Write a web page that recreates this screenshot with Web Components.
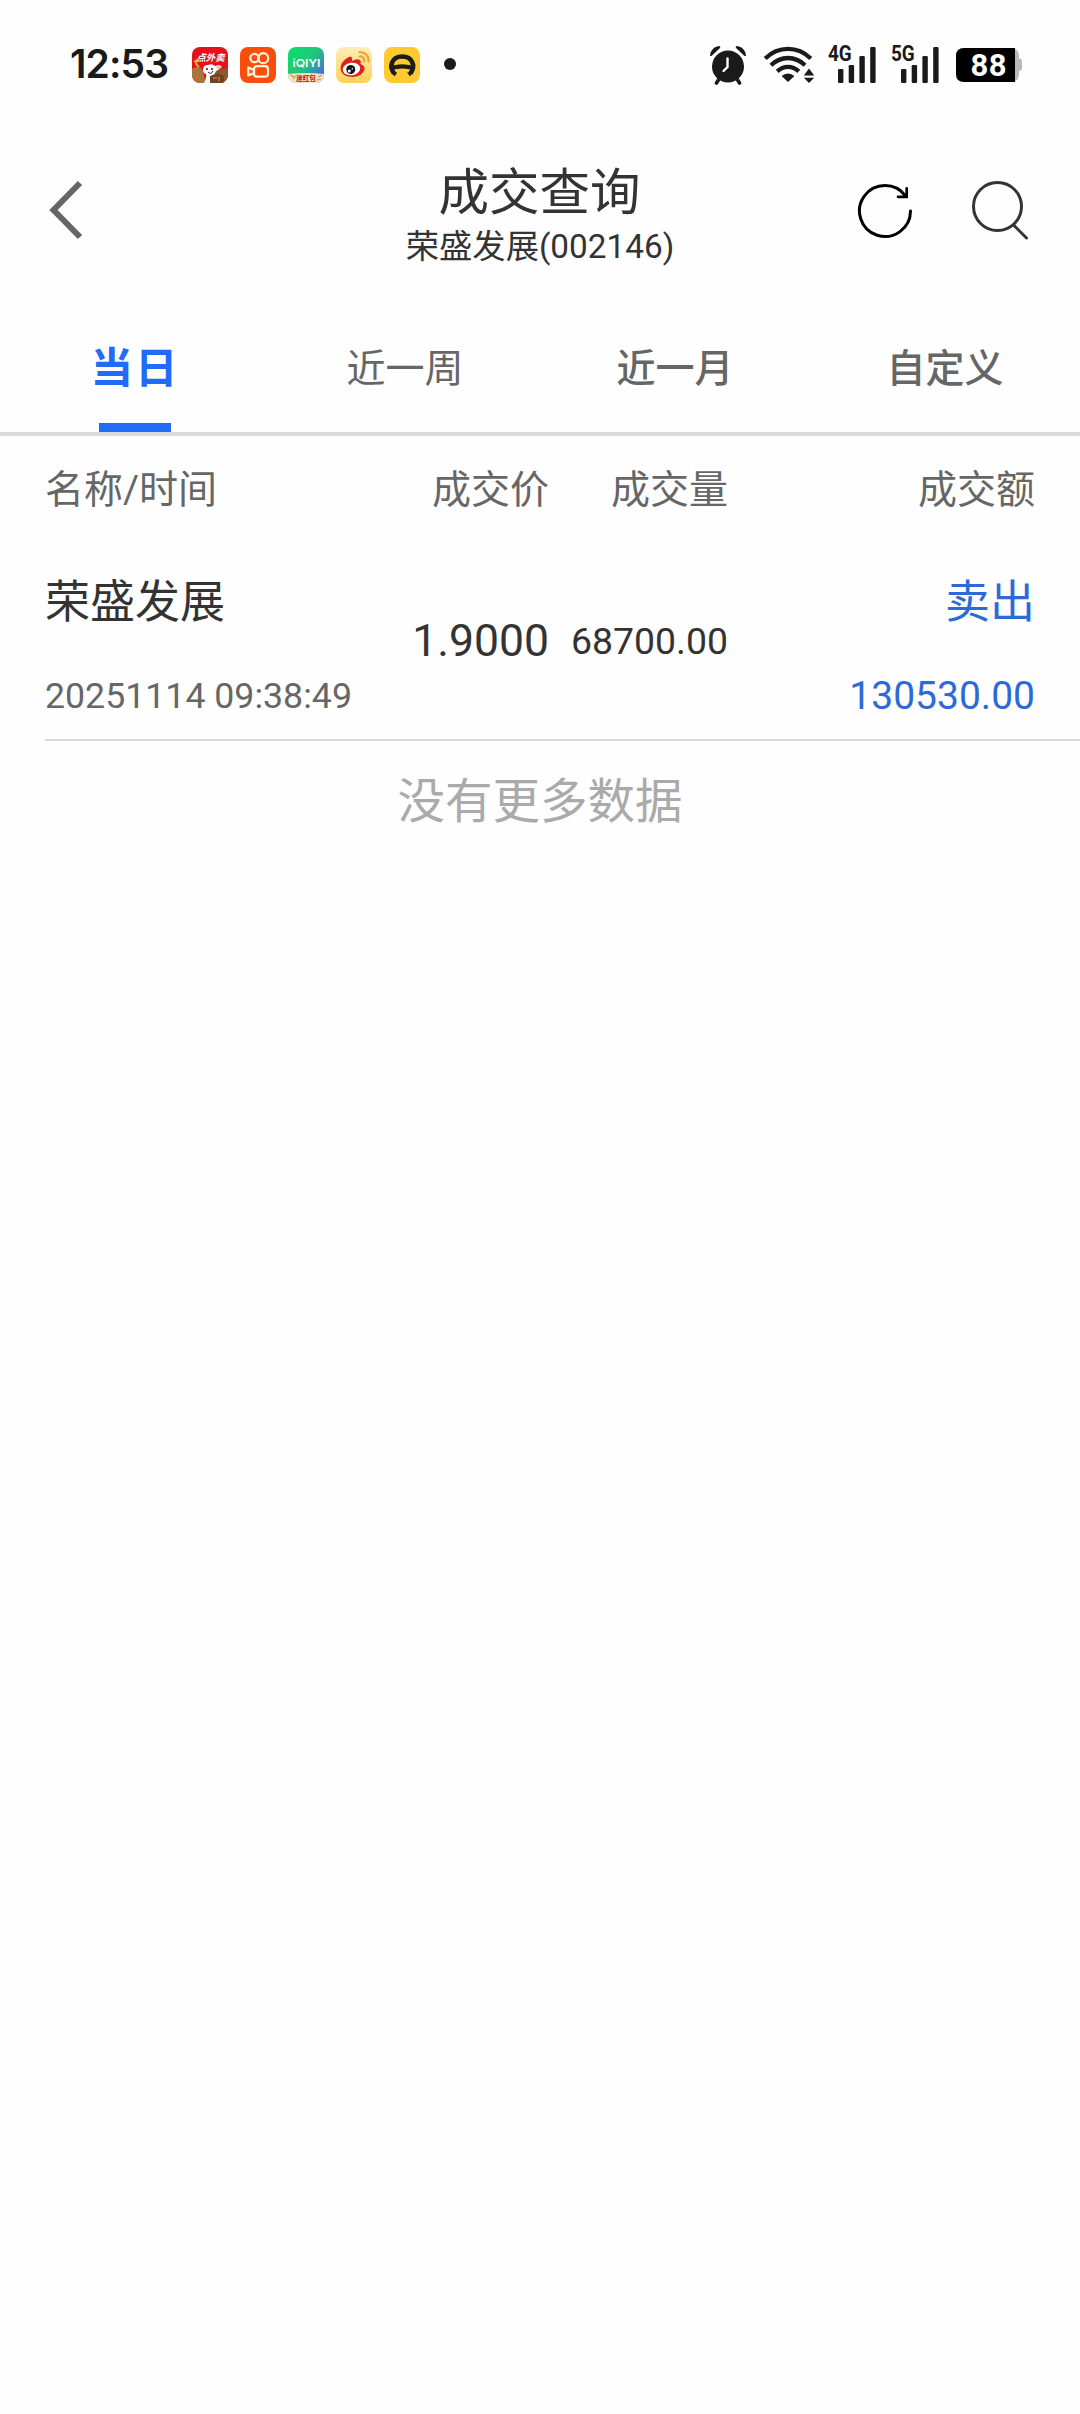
<!DOCTYPE html>
<html lang="zh-CN">
<head>
<meta charset="utf-8">
<title>成交查询</title>
<style>
html,body{margin:0;padding:0}
body{background:#fefefe;font-family:Roboto,"Noto Sans CJK SC",sans-serif;color:#333;min-height:2414px}
</style>
</head>
<body>
<trade-page></trade-page>
<script>
function define(name, html){
  const t = document.createElement('template');
  t.innerHTML = html;
  customElements.define(name, class extends HTMLElement{
    constructor(){
      super();
      this.attachShadow({mode:'open'}).appendChild(t.content.cloneNode(true));
    }
  });
}

define('app-badges', `
<style>:host{display:flex;gap:12px;align-items:center}svg{display:block;width:36px;height:36px}</style>
<svg viewBox="0 0 36 36"><defs><clipPath id="j"><rect width="36" height="36" rx="8"/></clipPath></defs>
 <g clip-path="url(#j)"><rect width="36" height="36" fill="#e3121b"/>
 <path d="M0 22Q7 17 11 24L14 36H0Z" fill="#a8763d"/><path d="M22 24L36 21V36H22Z" fill="#8b5a2b"/>
 <path d="M2 15L5 13L4 17L7 20" fill="none" stroke="#f0a030" stroke-width="2"/>
 <path d="M11 23Q11 18 16 18Q20 16 23 19Q29 17 29 20Q27 23 24 24L22 28Q20 31 20 36H12Q15 30 14 27Q11 26 11 23Z" fill="#fff"/>
 <path d="M24 19Q29 17 30 20Q27 23 25 22Z" fill="#f4c7ba"/>
 <circle cx="15" cy="22" r="1" fill="#222"/><circle cx="20" cy="22" r="1" fill="#222"/><path d="M16 25Q19 28 21 24" fill="none" stroke="#222"/>
 <path d="M18 29L26 26L32 29V36H18Z" fill="#71431f"/><path d="M21 31h4M27 30v4" stroke="#d9a05a"/>
 <text x="18.5" y="14" font-size="9.4" font-weight="700" font-style="italic" text-anchor="middle" fill="#fff">点外卖</text></g></svg>
<svg viewBox="0 0 36 36"><rect width="36" height="36" rx="8" fill="#fb4d0c"/>
 <g fill="none" stroke="#fff3dc" stroke-width="2.2"><circle cx="14.5" cy="11" r="4.2"/><circle cx="23.2" cy="11.2" r="5"/><rect x="14" y="19.2" width="14" height="10.5" rx="3"/><path d="M14 23L8.3 20.5V28.5L14 26Z" stroke-linejoin="round"/></g></svg>
<svg viewBox="0 0 36 36"><defs><linearGradient id="g" x1="0" y1="0" x2="1" y2=".8"><stop offset="0" stop-color="#0be06b"/><stop offset=".55" stop-color="#22c47a"/><stop offset="1" stop-color="#4b62e8"/></linearGradient><clipPath id="q"><rect width="36" height="36" rx="8"/></clipPath></defs>
 <g clip-path="url(#q)"><rect width="36" height="36" fill="url(#g)"/><path d="M0 27Q18 25 36 27V36H0Z" fill="#fbe3c6"/>
 <path d="M2 28l4 2M5 32l3-3M30 30l4-2M29 33l4-1" stroke="#d8a368" stroke-width="1.4"/>
 <text x="18.500" y="19.500" font-family="Inter,sans-serif" font-size="10.8" font-weight="600" text-anchor="middle" fill="#fff" textLength="28" lengthAdjust="spacingAndGlyphs">iQIYI</text>
 <text x="18" y="34.2" font-size="6.6" font-weight="900" text-anchor="middle" fill="#c9241c">迷红包</text></g></svg>
<svg viewBox="0 0 36 36"><defs><linearGradient id="w" x1="0" y1="0" x2="0" y2="1"><stop offset="0" stop-color="#ffecb8"/><stop offset="1" stop-color="#ffd255"/></linearGradient></defs><rect width="36" height="36" rx="8" fill="url(#w)"/>
 <path d="M4.500 21Q5 15 11 11Q15 8 16 11Q16.500 13 16 14Q21 11 24 13Q25.500 14.500 24.500 17Q29 18.500 28.500 22Q27 29 17 30Q5 30 4.500 21Z" fill="#e01f1f"/>
 <ellipse cx="15.500" cy="22" rx="8.800" ry="6.300" fill="#fff" transform="rotate(-8 15.500 22)"/><circle cx="14.800" cy="22.500" r="4.500" fill="#151515"/><circle cx="13.300" cy="24" r="1.500" fill="#fff"/><circle cx="16.300" cy="21.800" r=".8" fill="#fff"/>
 <path d="M23.500 9.500Q28.500 9 28.300 14.300M23.500 5.200Q32.500 5 32.600 14.500" fill="none" stroke="#e9a53a" stroke-width="2.200" stroke-linecap="round"/></svg>
<svg viewBox="0 0 36 36"><rect width="36" height="36" rx="8" fill="#ffca31"/>
 <path d="M10 26.500C4.500 19 8 9.500 18.200 9.500S32 19 26.400 26.500" fill="none" stroke="#1c1c18" stroke-width="4.600"/>
 <path d="M7.200 24.500L13.300 25.500L10.500 29.500ZM29.200 24.500L23.100 25.500L26 29.500Z" fill="#1c1c18"/>
 <path d="M7.500 18.800Q18.200 15.600 29 18.800V23Q18.200 19.800 7.500 23Z" fill="#1c1c18"/></svg>
`);

define('cell-signal', `
<style>:host{display:block}svg{display:block}</style>
<svg width="48" height="40" viewBox="0 0 48 40"><g fill="#1a1a1a"><rect x="10" y="24" width="5.400" height="14" rx="1.200"/><rect x="20.700" y="20" width="5.400" height="18" rx="1.200"/><rect x="31.400" y="11" width="5.400" height="27" rx="1.200"/><rect x="42.200" y="2" width="5.400" height="36" rx="1.200"/></g></svg>
`);
// The network generation label overlaps the top of the signal bars.
define('mobile-signal', `
<style>:host{display:block;position:relative;width:48px;height:40px}
span{position:absolute;left:-.5px;top:-2px;font:700 22px/22px Roboto,sans-serif;color:#1a1a1a;transform:scaleX(.86);transform-origin:0 0}</style>
<cell-signal></cell-signal><span><slot></slot></span>
`);

define('status-bar', `
<style>
:host{display:flex;height:130px;box-sizing:border-box;align-items:center;padding:0 58px 0 70px;color:#1a1a1a}
.time{font:600 39px/48px Inter,sans-serif;width:122px;letter-spacing:-.9px;white-space:nowrap;margin-top:-2px}
.dot{width:12px;height:12px;border-radius:50%;background:#1a1a1a;margin-left:24px;margin-top:-2px}
.right{margin-left:auto;display:flex;align-items:center}
svg{display:block}
.alarm{margin-right:16px}.wifi{margin-right:13px}
mobile-signal{margin-right:15px}mobile-signal+mobile-signal{margin-right:17px}
</style>
<span class="time">12:53</span><app-badges></app-badges><i class="dot"></i>
<div class="right">
<svg class="alarm" width="38" height="40" viewBox="0 0 38 40"><g fill="#1a1a1a"><circle cx="19" cy="21.500" r="16"/><path d="M1 10.500Q1.500 3 9.500 1Q12 1 11 3L3 10.500Q1.500 11.500 1 10.500ZM37 10.500Q36.500 3 28.500 1Q26 1 27 3L35 10.500Q36.500 11.500 37 10.500Z"/></g><path d="M10 34L7.500 38M28 34L30.500 38" stroke="#1a1a1a" stroke-width="3.600" stroke-linecap="round"/><path d="M18.500 13.500V22L14.500 26" fill="none" stroke="#fff" stroke-width="2.400" stroke-linecap="round"/></svg>
<svg class="wifi" width="52" height="40" viewBox="0 0 52 40"><g fill="none" stroke="#1a1a1a" stroke-width="4.300"><path d="M2.200 13.500Q12 3.900 25 3.900T47.800 13.500"/><path d="M8 20.200Q15.500 13 25 13T42 20.200"/><path d="M14.200 26.400Q19 21.800 25 21.800T35.800 26.400"/></g><path d="M25 37L18.600 31Q21.500 28.500 25 28.500T31.400 31Z" fill="#1a1a1a"/><path d="M46 23.500L51.200 30.500H40.800ZM46 38L51.200 32.700H40.800Z" fill="#1a1a1a"/></svg>
<mobile-signal>4G</mobile-signal><mobile-signal>5G</mobile-signal>
<svg width="66" height="40" viewBox="0 -3 66 40"><path d="M56 0Q63 1 63 8V10.500H64Q66 11 66 13V20Q66 22.500 64 23H63V26Q63 33 56 34Z" fill="#b9b9b9"/><path d="M8 0H59V34H8Q0 34 0 26V8Q0 0 8 0Z" fill="#000"/><text x="32.500" y="28" font-family="Roboto,sans-serif" font-size="31" font-weight="700" text-anchor="middle" fill="#fff" textLength="36">88</text></svg>
</div>
`);

define('nav-header', `
<style>
:host{display:grid;grid-template-columns:200px 1fr 200px;height:160px;padding:0 24px 0 48px;box-sizing:border-box}
svg{display:block}
.l,.r{display:flex;align-items:center}
.r{justify-content:flex-end;gap:56px;padding-right:27px}
.c{display:flex;flex-direction:column;align-items:center;padding-top:33px;margin-right:24px;white-space:nowrap}
.t{font-size:50.500px;line-height:60px;margin-left:-1px}.s{font-size:33.300px;line-height:44px;margin-top:2px}
</style>
<div class="l"><svg width="40" height="60" viewBox="0 0 40 60"><path d="M32 3L5.500 30L32 57" fill="none" stroke="#666" stroke-width="6"/></svg></div>
<div class="c"><span class="t"><slot name="title"></slot></span><span class="s"><slot name="subtitle"></slot></span></div>
<div class="r">
<svg width="56" height="60" viewBox="0 0 56 60"><path d="M53.500 31A25.500 25.500 0 1 1 48.500 15.800" fill="none" stroke="#000" stroke-width="3" stroke-linecap="round"/><path d="M49.700 8.300V16.800H41" fill="none" stroke="#000" stroke-width="2.700" stroke-linecap="round"/></svg>
<svg width="60" height="60" viewBox="0 0 60 60"><circle cx="28.500" cy="26.500" r="24" fill="none" stroke="#333" stroke-width="3"/><path d="M44.500 45L57.500 58" stroke="#333" stroke-width="3" stroke-linecap="round"/></svg>
</div>
`);

define('tab-item', `
<style>
:host{flex:1;display:flex;flex-direction:column;align-items:center;justify-content:space-between;padding-top:49px;font-size:39px;line-height:60px;color:#666}
:host([medium]){font-weight:500}
:host([active]){color:#226bf8;font-weight:700;font-size:42.500px}
:host([active]) span{letter-spacing:2px}
i{display:block;width:72px;height:9px}
:host([active]) i{background:#226bf8}
</style><span><slot></slot></span><i></i>
`);
define('tab-bar', `<style>:host{display:flex;height:146px;box-sizing:border-box;border-bottom:4px solid #dadada}</style><slot></slot>`);

define('list-head', `
<style>:host{display:grid;grid-template-columns:365px 139px 179px 307px;height:108px;align-items:center;padding:0 45px;text-align:right;font-size:39px;line-height:60px;color:#666}
::slotted(:first-child){text-align:left}</style><slot></slot>
`);
define('trade-row', `
<style>
:host{display:grid;grid-template-columns:365px 139px 179px 307px;height:195px;align-items:center;margin-left:45px;padding-right:45px;text-align:right;border-bottom:2px solid #dadada}
.col{display:flex;flex-direction:column;gap:38px;align-self:start;padding-top:29px}
.name,.side{font-size:45px;line-height:60px}
.date,.sum{line-height:50px}
.name,.date{text-align:left}
.date{font-size:35.700px;color:#666}
.sum{font-size:39px}.blue{color:#2e69d8}
.price,.qty{line-height:60px;padding-bottom:2px}
.price{font-size:44.500px}.qty{font-size:37.400px}
</style>
<div class="col"><div class="name"><slot name="name"></slot></div><div class="date"><slot name="date"></slot></div></div>
<div class="price"><slot name="price"></slot></div><div class="qty"><slot name="qty"></slot></div>
<div class="col blue"><div class="side"><slot name="side"></slot></div><div class="sum"><slot name="sum"></slot></div></div>
`);
define('list-end', `<style>:host{display:block;padding:29px 0;text-align:center;font-size:47.500px;line-height:64px;color:#aaa}</style><slot></slot>`);

define('trade-page', `
<style>:host{display:flex;flex-direction:column}</style>
<status-bar></status-bar>
<nav-header><span slot="title">成交查询</span><span slot="subtitle">荣盛发展(002146)</span></nav-header>
<tab-bar><tab-item active>当日</tab-item><tab-item>近一周</tab-item><tab-item medium>近一月</tab-item><tab-item medium>自定义</tab-item></tab-bar>
<list-head><span>名称/时间</span><span>成交价</span><span>成交量</span><span>成交额</span></list-head>
<trade-row><span slot="name">荣盛发展</span><span slot="date">20251114 09:38:49</span><span slot="price">1.9000</span><span slot="qty">68700.00</span><span slot="side">卖出</span><span slot="sum">130530.00</span></trade-row>
<list-end>没有更多数据</list-end>
`);
</script>
</body>
</html>
